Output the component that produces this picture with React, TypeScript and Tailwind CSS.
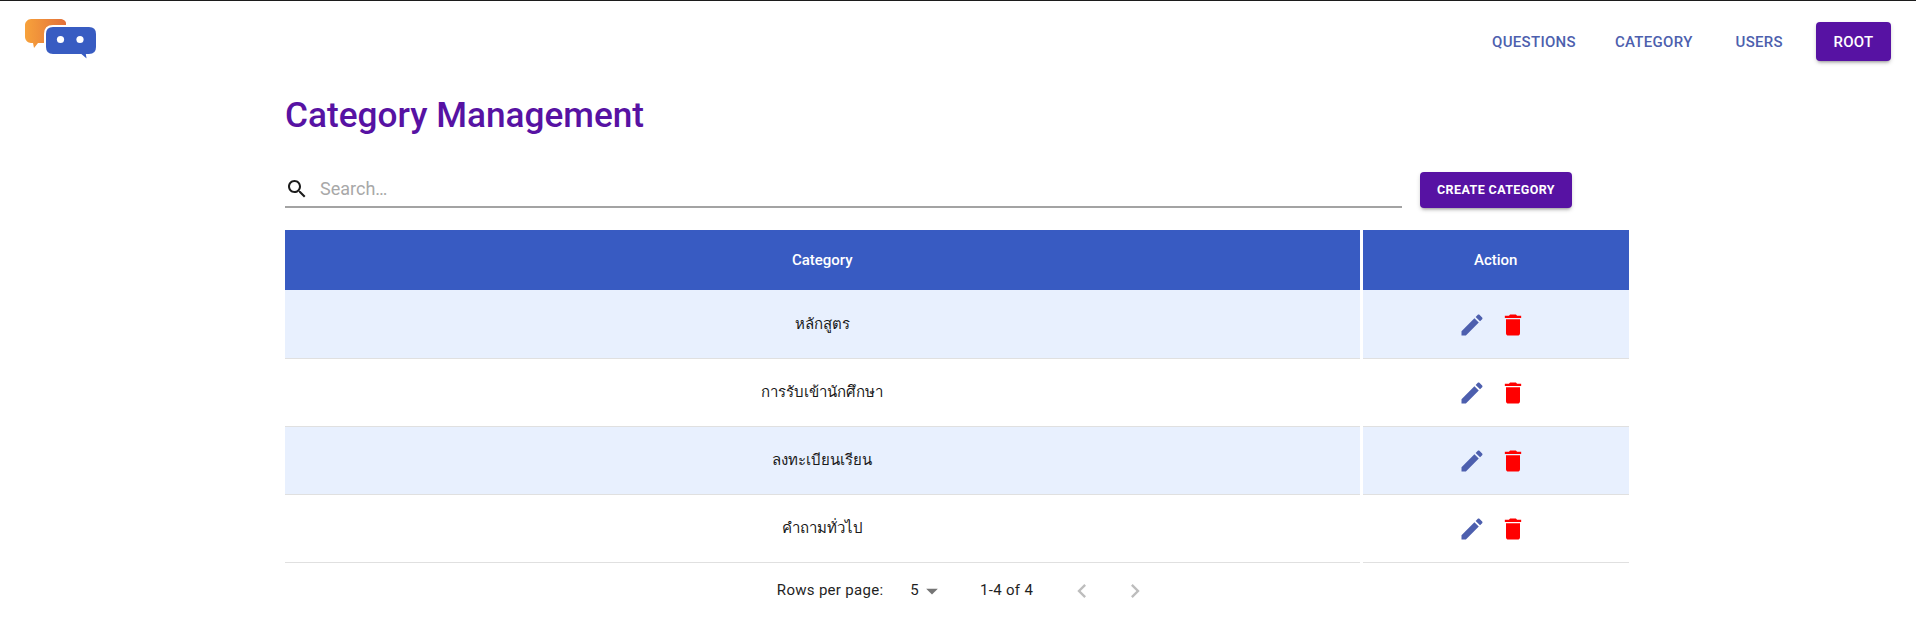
// App.tsx
import React from 'react';

const categories = ['หลักสูตร', 'การรับเข้านักศึกษา', 'ลงทะเบียนเรียน', 'คำถามทั่วไป'];

const Icon: React.FC<{ d: string; className: string }> = ({ d, className }) => (
  <svg viewBox="0 0 24 24" fill="currentColor" className={className}>
    <path d={d} />
  </svg>
);

const Logo = () => (
  <svg width="74" height="46" viewBox="0 0 74 46" className="block">
    <defs>
      <linearGradient id="orange" x1="0" y1="0" x2="1" y2="0">
        <stop offset="0" stopColor="#f7a23b" />
        <stop offset="1" stopColor="#e2703a" />
      </linearGradient>
    </defs>
    <path d="M6 0h29c3 0 6 2 6 4v20H13l-4 5-1-5H6c-3 0-6-3-6-6V6c0-3 3-6 6-6z" fill="url(#orange)" />
    <path d="M28 7h36c5 0 8 3 8 8v13c0 5-3 8-8 8h-2l1 6-7-6H28c-5 0-8-3-8-8V15c0-5 3-8 8-8z" fill="#385cc2" stroke="#fff" strokeWidth="2" />
    <circle cx="35.5" cy="20.5" r="3.6" fill="#fff" />
    <circle cx="55" cy="20.5" r="3.6" fill="#fff" />
  </svg>
);

const App: React.FC = () => {
  return (
    <div className="h-[623px] bg-white border-t border-[#1c1c1c] font-['Roboto','Noto_Sans',sans-serif] overflow-hidden">
      <header className="flex items-start justify-between h-[91px] pl-[25px] pr-[25px]">
        <div className="pt-[18px]">
          <Logo />
        </div>
        <nav className="flex items-center pt-[21px] text-[15px] font-medium tracking-[0.3px] text-[#4d5fae]">
          <a className="mr-[39px] pt-[2px]">QUESTIONS</a>
          <a className="mr-[43px] pt-[2px]">CATEGORY</a>
          <a className="mr-[33px] pt-[2px]">USERS</a>
          <button className="w-[75px] h-[39px] pt-[2px] rounded bg-[#5712a3] text-white font-medium tracking-[0.3px] shadow-[0_3px_3px_-2px_rgba(0,0,0,0.3),0_2px_4px_rgba(0,0,0,0.16)]">
            ROOT
          </button>
        </nav>
      </header>

      <main className="ml-[285px] w-[1344px]">
        <h1 className="text-[35.2px] leading-[46px] font-medium text-[#5712a3]">Category Management</h1>

        <div className="flex items-end mt-[34px]">
          <div className="flex items-center w-[1117px] h-[36px] border-b-2 border-[#a3a3a3]">
            <Icon
              className="w-[24px] h-[24px] text-[#1c1c1c] shrink-0"
              d="M15.5 14h-.79l-.28-.27C15.41 12.59 16 11.11 16 9.5 16 5.91 13.09 3 9.5 3S3 5.91 3 9.5 5.91 16 9.5 16c1.61 0 3.09-.59 4.23-1.57l.27.28v.79l5 4.99L20.49 19l-4.99-5zm-6 0C7.01 14 5 11.99 5 9.5S7.01 5 9.5 5 14 7.01 14 9.5 11.99 14 9.5 14z"
            />
            <input
              placeholder="Search…"
              className="ml-[11px] flex-1 text-[18px] pb-[2px] text-[#333] outline-none placeholder:text-[#a8a8a8]"
            />
          </div>
          <button className="ml-[18px] w-[152px] h-[36px] rounded bg-[#5712a3] text-white text-[12.5px] font-bold tracking-[0.4px] shadow-[0_3px_3px_-2px_rgba(0,0,0,0.3),0_2px_4px_rgba(0,0,0,0.16)]">
            CREATE CATEGORY
          </button>
        </div>

        <table className="w-full mt-[22px] border-collapse table-fixed text-[15px]">
          <thead>
            <tr className="h-[60px] bg-[#385bc2] text-white font-medium">
              <th className="w-[1076px] font-medium border-r-[3px] border-white">Category</th>
              <th className="font-medium">Action</th>
            </tr>
          </thead>
          <tbody>
            {categories.map((name, i) => (
              <tr key={name} className={`h-[68px] border-b border-[#e0e0e0] text-[#1a1a1a] ${i % 2 === 0 ? 'bg-[#e8f0fe]' : 'bg-white'}`}>
                <td className="text-center font-medium border-r-[3px] border-white">{name}</td>
                <td>
                  <div className="flex items-center justify-center gap-[13px] pr-[6px] pt-[2px]">
                    <Icon
                      className="w-[28px] h-[28px] text-[#4d5fae]"
                      d="M3 17.25V21h3.75L17.81 9.94l-3.75-3.75L3 17.25zM20.71 7.04c.39-.39.39-1.02 0-1.41l-2.34-2.34c-.39-.39-1.02-.39-1.41 0l-1.83 1.83 3.75 3.75 1.83-1.83z"
                    />
                    <Icon
                      className="w-[28px] h-[28px] text-[#ff0000]"
                      d="M6 19c0 1.1.9 2 2 2h8c1.1 0 2-.9 2-2V7H6v12zM19 4h-3.5l-1-1h-5l-1 1H5v2h14V4z"
                    />
                  </div>
                </td>
              </tr>
            ))}
          </tbody>
        </table>

        <div className="flex items-center justify-center h-[56px] pl-[12px] text-[15px] text-[#1f1f1f] tracking-[0.3px]">
          <span>Rows per page:</span>
          <span className="ml-[27px]">5</span>
          <Icon className="w-[28px] h-[28px] text-[#757575] ml-[-1px]" d="M7 10l5 5 5-5z" />
          <span className="ml-[34px]">1-4 of 4</span>
          <Icon className="w-[28px] h-[28px] text-[#bdbdbd] ml-[35px]" d="M15.41 7.41L14 6l-6 6 6 6 1.41-1.41L10.83 12z" />
          <Icon className="w-[28px] h-[28px] text-[#bdbdbd] ml-[25px]" d="M10 6L8.59 7.41 13.17 12l-4.58 4.58L10 18l6-6z" />
        </div>
      </main>
    </div>
  );
};

export default App;
